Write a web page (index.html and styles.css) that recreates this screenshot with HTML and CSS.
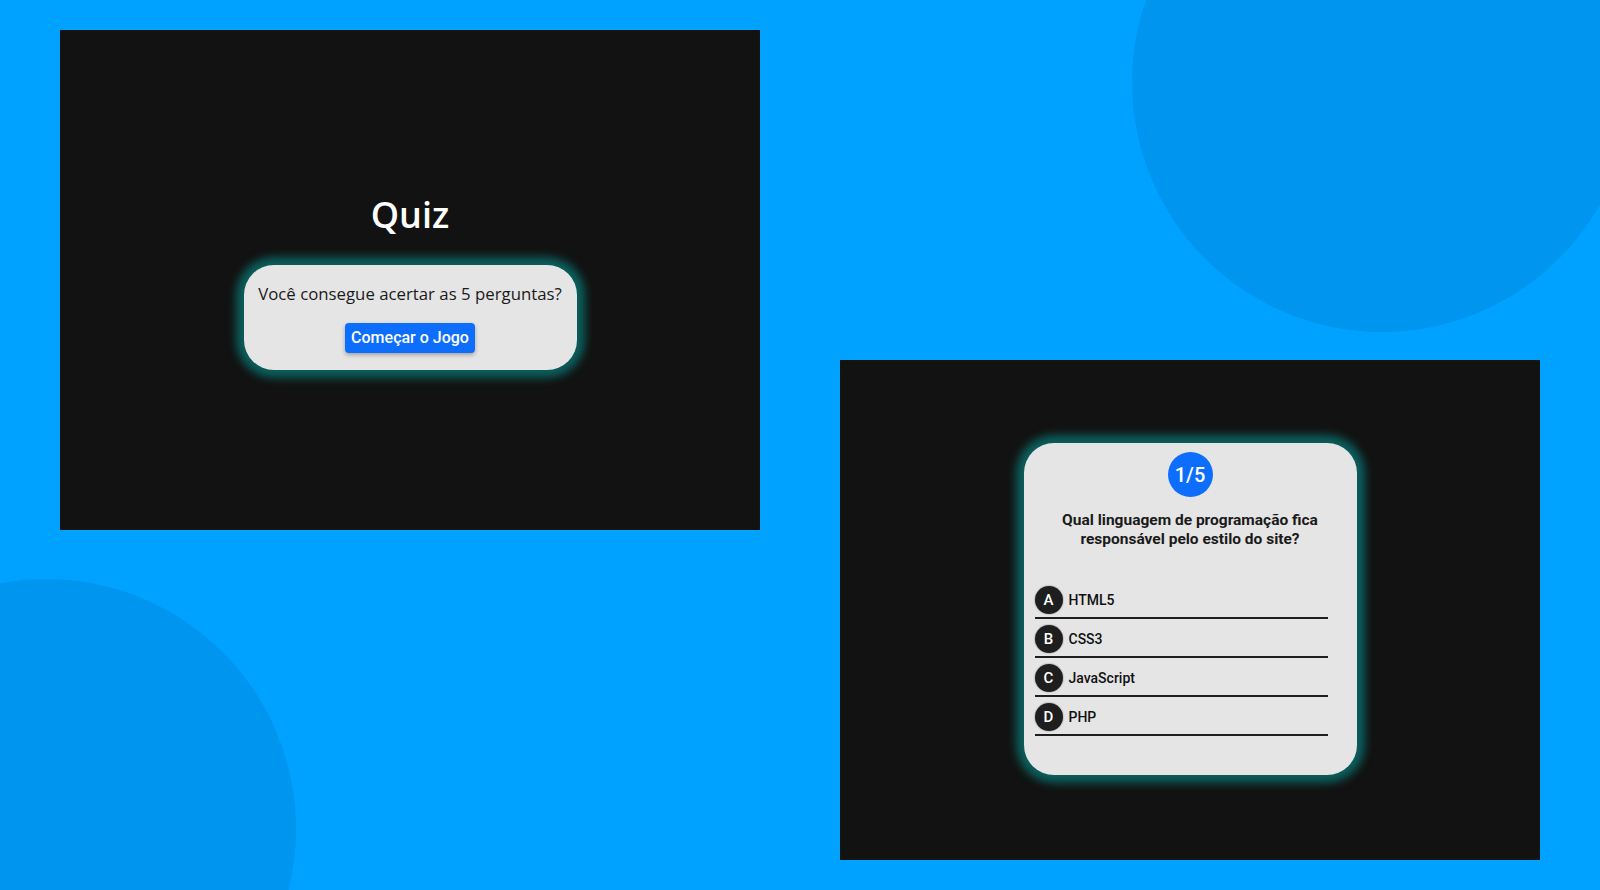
FILE: index.html
```html
<!DOCTYPE html>
<html lang="pt-BR">
<head>
<meta charset="utf-8">
<title>Quiz</title>
<link rel="stylesheet" href="styles.css">
</head>
<body>
<div class="stage">
  <div class="blob blob-top"></div>
  <div class="blob blob-bottom"></div>
  <div class="screens">
    <section class="panel panel-start">
      <h1 class="title">Quiz</h1>
      <div class="card start-card">
        <p class="intro">Você consegue acertar as 5 perguntas?</p>
        <button class="btn">Começar o Jogo</button>
      </div>
    </section>
    <section class="panel panel-question">
      <div class="card question-card">
        <div class="badge">1/5</div>
        <p class="question">Qual linguagem de programação fica responsável pelo estilo do site?</p>
        <ul class="options">
          <li class="option"><span class="letter">A</span><span class="label">HTML5</span></li>
          <li class="option"><span class="letter">B</span><span class="label">CSS3</span></li>
          <li class="option"><span class="letter">C</span><span class="label">JavaScript</span></li>
          <li class="option"><span class="letter">D</span><span class="label">PHP</span></li>
        </ul>
      </div>
    </section>
  </div>
</div>
</body>
</html>
```

FILE: styles.css
```css
* { box-sizing: border-box; }
html, body {
  margin: 0;
  padding: 0;
  width: 1600px;
  height: 890px;
  overflow: hidden;
  background: #00a2ff;
  font-family: "Open Sans", "Liberation Sans", sans-serif;
}
.stage {
  position: relative;
  width: 1600px;
  height: 890px;
  overflow: hidden;
}
.blob {
  position: absolute;
  width: 500px;
  height: 500px;
  border-radius: 50%;
  background: #0095ee;
}
.blob-top { left: 1132px; top: -168px; }
.blob-bottom { left: -204px; top: 579px; }

.screens {
  position: relative;
  display: grid;
  grid-template-columns: 700px 700px;
  column-gap: 80px;
  padding: 30px 0 0 60px;
  align-items: start;
}
.panel {
  height: 500px;
  background: #121212;
  display: flex;
  flex-direction: column;
  align-items: center;
}
.panel-start { padding-top: 160px; }
.panel-question { margin-top: 330px; padding-top: 83px; }

.title {
  margin: 0 0 25px;
  font-family: "Open Sans", sans-serif;
  font-weight: 600;
  font-size: 36px;
  line-height: 50px;
  color: #ffffff;
}
.card {
  background: #e5e5e5;
  border-radius: 30px;
  box-shadow: 0 0 8px 8px #0b5f5d;
}
.start-card {
  width: 333px;
  height: 105px;
  padding: 16px 10px 0;
  display: flex;
  flex-direction: column;
  align-items: center;
}
.intro {
  margin: 0 0 16px;
  font-size: 16.8px;
  line-height: 26px;
  color: #1a1a1a;
  white-space: nowrap;
}
.btn {
  font-family: Roboto, sans-serif;
  font-weight: 500;
  font-size: 16px;
  line-height: 22px;
  color: #ffffff;
  background: #0d6efd;
  border: none;
  border-radius: 4px;
  padding: 4px 6px;
  box-shadow: 0 2px 4px rgba(0, 0, 0, 0.3);
}

.question-card {
  width: 333px;
  height: 332px;
  padding: 9px 29px 0 11px;
  display: flex;
  flex-direction: column;
  align-items: center;
}
.badge {
  width: 45px;
  height: 45px;
  border-radius: 50%;
  background: #0d6efd;
  color: #ffffff;
  font-family: Roboto, sans-serif;
  font-weight: 500;
  font-size: 20px;
  display: flex;
  align-items: center;
  justify-content: center;
  margin-left: 18px;
}
.question {
  margin: 14px 0 0;
  width: 293px;
  padding-left: 18px;
  text-align: center;
  font-family: Roboto, sans-serif;
  font-weight: 700;
  font-size: 15.5px;
  line-height: 19px;
  color: #1a1a1a;
}
.options {
  list-style: none;
  margin: 31px 0 0;
  padding: 0;
  width: 293px;
}
.option {
  display: flex;
  align-items: center;
  gap: 6px;
  padding: 6px 0 3px;
  border-bottom: 2px solid #1e1e1e;
}
.letter {
  width: 28px;
  height: 28px;
  border-radius: 50%;
  background: #1e1e1e;
  color: #ffffff;
  font-family: Roboto, sans-serif;
  font-weight: 500;
  font-size: 15px;
  display: flex;
  align-items: center;
  justify-content: center;
  box-shadow: 0 0 1px 1px rgba(0, 0, 0, 0.15);
}
.label {
  font-family: Roboto, sans-serif;
  font-weight: 500;
  font-size: 14px;
  color: #111111;
}
```
